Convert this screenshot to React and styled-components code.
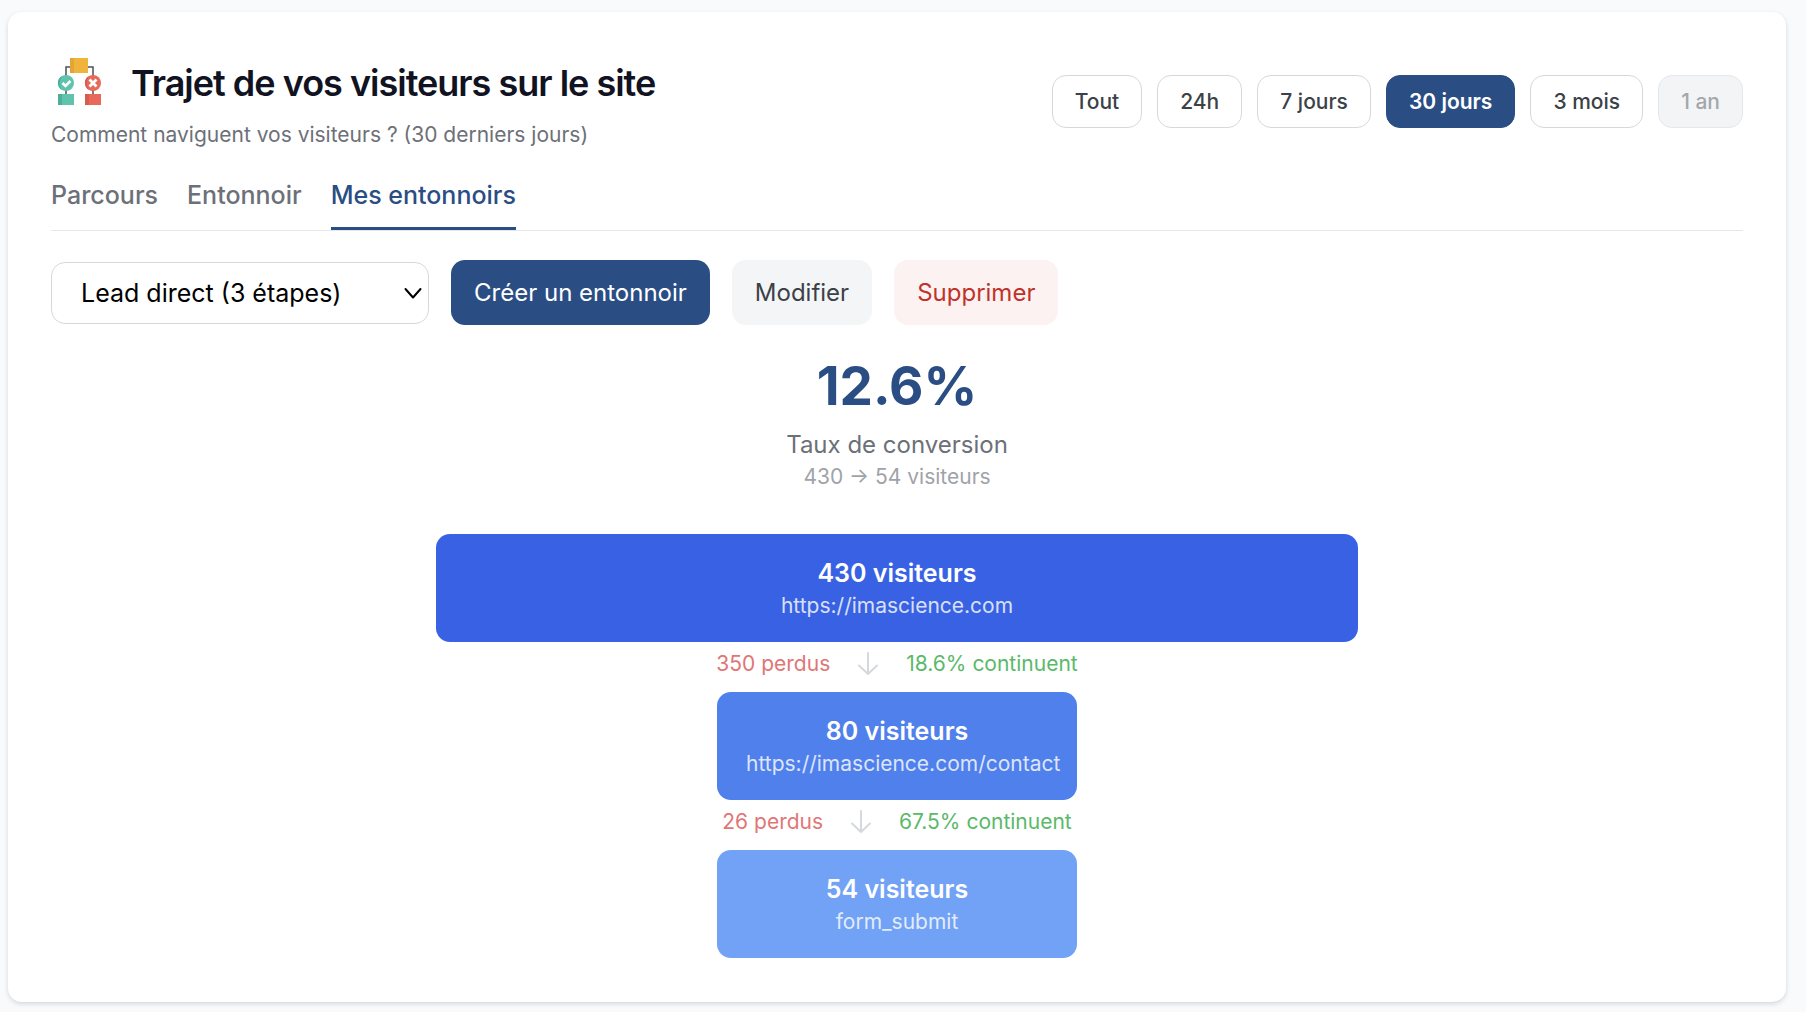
import React, { useState } from "react";
import styled, { createGlobalStyle } from "styled-components";

const GlobalStyle = createGlobalStyle`
  *, *::before, *::after { box-sizing: border-box; }
  body {
    margin: 0;
    background: #f9fafc;
    font-family: Inter, "Liberation Sans", sans-serif;
    color: #111827;
  }
  button, select { font-family: inherit; margin: 0; }
  h1, p { margin: 0; }
`;

const Page = styled.main`
  padding: 12px 20px 10px 8px;
`;

const Card = styled.section`
  background: #fff;
  border-radius: 14px;
  padding: 43px 43px 44px;
  box-shadow: 0 2px 5px rgba(0, 0, 0, 0.14);
`;

const Header = styled.header`
  display: flex;
  align-items: center;
  justify-content: space-between;
  flex-wrap: wrap;
  gap: 16px;
`;

const TitleRow = styled.div`
  display: flex;
  align-items: center;
  gap: 22px;
  height: 56px;
`;

const Title = styled.h1`
  font-size: 36px;
  line-height: 44px;
  font-weight: 600;
  letter-spacing: -1px;
  color: #111322;
`;

const Subtitle = styled.p`
  margin-top: 11px;
  font-size: 21px;
  line-height: 25px;
  color: #6c7078;
`;

const Periods = styled.div`
  display: flex;
  flex-wrap: wrap;
  gap: 15px;
`;

const Period = styled.button`
  height: 53px;
  padding: 0 22px;
  border: 1px solid ${(p) => (p.$active ? "#2a4d84" : "#d6d8dc")};
  border-radius: 14px;
  background: ${(p) => (p.$active ? "#2a4d84" : "#fff")};
  color: ${(p) => (p.$active ? "#fff" : "#3c4148")};
  font-size: 21px;
  font-weight: ${(p) => (p.$active ? 600 : 500)};
  white-space: nowrap;
  cursor: pointer;

  &:disabled {
    background: #f3f4f6;
    border-color: #e5e7eb;
    color: #a3a7ac;
    cursor: not-allowed;
  }
`;

const Tabs = styled.nav`
  display: flex;
  gap: 29px;
  margin-top: 29px;
  border-bottom: 1px solid #e5e7eb;
`;

const Tab = styled.button`
  height: 54px;
  padding: 0 0 12px;
  border: 0;
  border-bottom: 3px solid ${(p) => (p.$active ? "#2a4d84" : "transparent")};
  background: none;
  color: ${(p) => (p.$active ? "#2a4d84" : "#6c7078")};
  font-size: 25px;
  line-height: 33px;
  font-weight: 500;
  cursor: pointer;
`;

const Toolbar = styled.div`
  display: flex;
  align-items: center;
  flex-wrap: wrap;
  gap: 22px;
  margin-top: 29px;
`;

const SelectWrap = styled.div`
  position: relative;
  width: 378px;

  svg {
    position: absolute;
    right: 7px;
    top: 25px;
    pointer-events: none;
  }
`;

const Select = styled.select`
  appearance: none;
  width: 100%;
  height: 62px;
  padding: 0 36px 0 29px;
  border: 1px solid #d6d8dc;
  border-radius: 14px;
  background: #fff;
  color: #000;
  font-size: 25px;
`;

const tones = {
  primary: ["#2a4d84", "#fff"],
  neutral: ["#f3f5f7", "#3c4148"],
  danger: ["#fdf2f2", "#c0322b"],
};

const Action = styled.button`
  height: 65px;
  padding: 0 23px;
  border: 0;
  border-radius: 14px;
  background: ${(p) => tones[p.$tone][0]};
  color: ${(p) => tones[p.$tone][1]};
  font-size: 24px;
  white-space: nowrap;
  cursor: pointer;
`;

const Summary = styled.div`
  margin-top: 29px;
  text-align: center;
`;

const Rate = styled.p`
  font-size: 53px;
  line-height: 65px;
  font-weight: 700;
  color: #2a4d84;
`;

const RateLabel = styled.p`
  margin-top: 8px;
  font-size: 24px;
  line-height: 36px;
  color: #6c7078;
`;

const RateDetail = styled.p`
  font-size: 21px;
  line-height: 28px;
  color: #9fa3a9;
`;

const Funnel = styled.div`
  display: flex;
  flex-direction: column;
  align-items: center;
  max-width: 922px;
  margin: 43px auto 0;
`;

const Step = styled.div`
  min-width: 360px;
  height: 108px;
  padding: 21px 29px;
  border-radius: 14px;
  background: ${(p) => p.$color};
  color: #fff;
  text-align: center;
  white-space: nowrap;
`;

const StepCount = styled.p`
  font-size: 25px;
  line-height: 36px;
  font-weight: 600;
`;

const StepTarget = styled.p`
  font-size: 21px;
  line-height: 29px;
  opacity: 0.8;
`;

const Transition = styled.div`
  display: flex;
  align-items: center;
  gap: 28px;
  height: 50px;
  padding-bottom: 7px;
  font-size: 21px;
`;

const Lost = styled.span`
  color: #e07676;
`;

const Kept = styled.span`
  color: #5bb96a;
`;

function FlowIcon() {
  return (
    <svg width="58" height="50" viewBox="0 0 58 50" aria-hidden="true">
      <path d="M15 39V9h27v30" fill="none" stroke="#4b5157" strokeWidth="1.500" />
      <path d="M19 0h18v15H19z" fill="#f0b43c" />
      <path d="M19 0h4v15h-4z" fill="#e2a536" />
      <circle cx="15" cy="25" r="8" fill="#5fc3ae" />
      <path d="M11 18a8 8 0 0 0 0 14a12 12 0 0 1 0-14" fill="#50ad9a" />
      <path d="M11.500 25l3 3l5-5" fill="none" stroke="#fff" strokeWidth="2.600" />
      <circle cx="42" cy="25" r="8" fill="#e8695a" />
      <path d="M38 18a8 8 0 0 0 0 14a12 12 0 0 1 0-14" fill="#d65c4e" />
      <path d="M38.500 21.500l7 7M45.500 21.500l-7 7" stroke="#fff" strokeWidth="2.800" />
      <path d="M7 36h16v11H7z" fill="#5fc3ae" />
      <path d="M7 36h4v11H7z" fill="#50ad9a" />
      <path d="M34 36h16v11H34z" fill="#e8695a" />
      <path d="M34 36h4v11h-4z" fill="#d65c4e" />
    </svg>
  );
}

function Chevron() {
  return (
    <svg width="18" height="13" viewBox="0 0 18 13" aria-hidden="true">
      <path d="M1.500 2l7.500 8.500L16.500 2" fill="none" stroke="#000" strokeWidth="2" strokeLinecap="round" strokeLinejoin="round" />
    </svg>
  );
}

function DownArrow() {
  return (
    <svg width="20" height="24" viewBox="0 0 20 24" aria-hidden="true">
      <path d="M10 1v21M1 13.500l9 8.500l9-8.500" fill="none" stroke="#d5d8dc" strokeWidth="2" strokeLinecap="round" strokeLinejoin="round" />
    </svg>
  );
}

const periods = ["Tout", "24h", "7 jours", "30 jours", "3 mois", "1 an"];
const tabs = ["Parcours", "Entonnoir", "Mes entonnoirs"];
const steps = [
  { count: 430, target: "https://imascience.com", color: "#3862e3", lost: 350, kept: "18.6%" },
  { count: 80, target: "https://imascience.com/contact", color: "#4f80ec", lost: 26, kept: "67.5%" },
  { count: 54, target: "form_submit", color: "#71a2f5" },
];

export default function App() {
  const [period, setPeriod] = useState("30 jours");
  const [tab, setTab] = useState("Mes entonnoirs");

  return (
    <Page>
      <GlobalStyle />
      <Card>
        <Header>
          <div>
            <TitleRow>
              <FlowIcon />
              <Title>Trajet de vos visiteurs sur le site</Title>
            </TitleRow>
            <Subtitle>Comment naviguent vos visiteurs ? (30 derniers jours)</Subtitle>
          </div>
          <Periods>
            {periods.map((p) => (
              <Period key={p} type="button" $active={p === period} disabled={p === "1 an"} onClick={() => setPeriod(p)}>
                {p}
              </Period>
            ))}
          </Periods>
        </Header>

        <Tabs>
          {tabs.map((t) => (
            <Tab key={t} type="button" $active={t === tab} onClick={() => setTab(t)}>
              {t}
            </Tab>
          ))}
        </Tabs>

        <Toolbar>
          <SelectWrap>
            <Select aria-label="Entonnoir" defaultValue="lead">
              <option value="lead">Lead direct (3 étapes)</option>
            </Select>
            <Chevron />
          </SelectWrap>
          <Action type="button" $tone="primary">Créer un entonnoir</Action>
          <Action type="button" $tone="neutral">Modifier</Action>
          <Action type="button" $tone="danger">Supprimer</Action>
        </Toolbar>

        <Summary>
          <Rate>12.6%</Rate>
          <RateLabel>Taux de conversion</RateLabel>
          <RateDetail>430 → 54 visiteurs</RateDetail>
        </Summary>

        <Funnel>
          {steps.map((s) => (
            <React.Fragment key={s.target}>
              <Step $color={s.color} style={{ width: `${(s.count / steps[0].count) * 100}%` }}>
                <StepCount>{s.count} visiteurs</StepCount>
                <StepTarget>{s.target}</StepTarget>
              </Step>
              {s.lost && (
                <Transition>
                  <Lost>{s.lost} perdus</Lost>
                  <DownArrow />
                  <Kept>{s.kept} continuent</Kept>
                </Transition>
              )}
            </React.Fragment>
          ))}
        </Funnel>
      </Card>
    </Page>
  );
}
